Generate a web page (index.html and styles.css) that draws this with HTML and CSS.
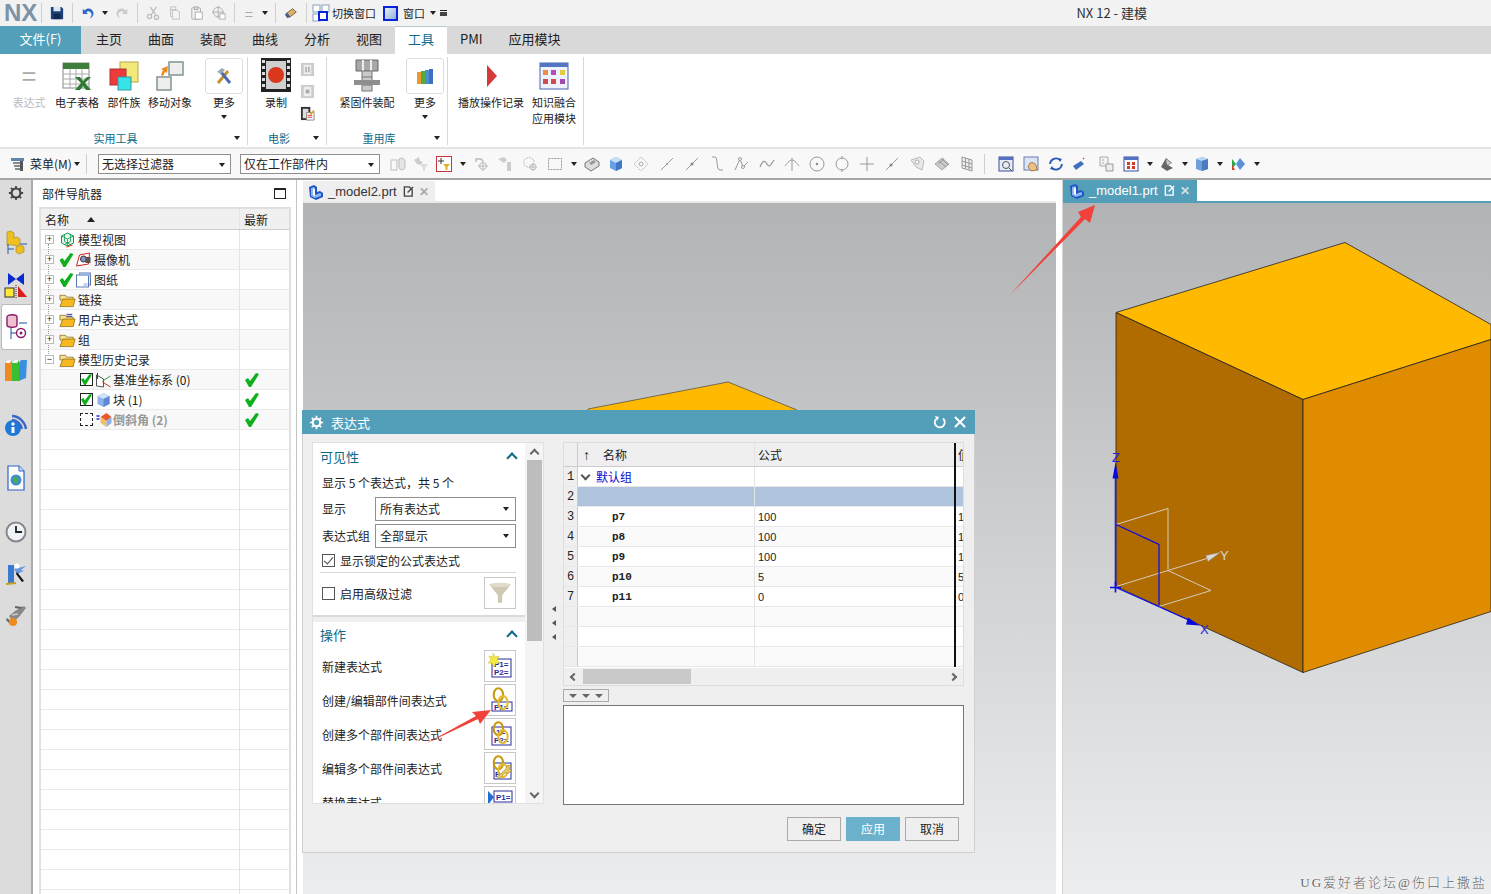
FILE: index.html
```html
<!DOCTYPE html>
<html lang="zh-CN">
<head>
    <meta charset="UTF-8">
    <title>NX 12 - 建模</title>
    <link rel="stylesheet" href="styles.css">
</head>
<body>
    <svg class="defs" width="0" height="0">
        <symbol id="partcube" viewBox="0 0 16 16">
            <path d="M1 3l5-2 3 2v5l3-1 3 2v4l-7 3-6-3z" fill="#1f55c8"/>
            <path d="M3 4l3-1 1 1v7l5-2 1 1v2l-6 2-4-2z" fill="#8fb8f0"/>
            <path d="M5 5v6l2 1V5z" fill="#ffffff"/>
        </symbol>
        <symbol id="tabdoc" viewBox="0 0 12 12">
            <path d="M1.500 1h5.500l3 3v7h-8.500z" fill="none" stroke="currentColor" stroke-width="1.500"/>
            <path d="M5 7l6-6" stroke="currentColor" stroke-width="1.500"/>
        </symbol>
        <symbol id="okcheck" viewBox="0 0 14 14">
            <path d="M0 7l3-2 2 3 6-8 3 1-8 13H4z" fill="#10b01c"/>
        </symbol>
        <symbol id="folder" viewBox="0 0 18 16">
            <path d="M1 3h6l1 2h7v3H1z" fill="#f6e39a" stroke="#8a6a10" stroke-width=".8"/>
            <path d="M1 15l3-8h13l-2 8z" fill="#f7b820" stroke="#8a6a10" stroke-width=".8"/>
        </symbol>
        <symbol id="chain" viewBox="0 0 14 20">
            <ellipse cx="5" cy="6" rx="3.600" ry="5" fill="none" stroke="#c79a10" stroke-width="1.600"/>
            <ellipse cx="8.500" cy="12" rx="3.600" ry="5" fill="none" stroke="#e2bb30" stroke-width="1.600"/>
        </symbol>
    </svg>

    <div class="app">
        <div class="quickbar">
            <span class="nx-logo">NX</span>
            <span class="vsep"></span>
            <svg class="qi" viewBox="0 0 16 16"><path d="M1 1h12l2 2v12H1z" fill="#1d3f78"/><rect x="4" y="1" width="8" height="5" fill="#dfe8f5"/><rect x="4" y="9" width="8" height="6" fill="#12294f"/></svg>
            <span class="vsep"></span>
            <svg class="qi" viewBox="0 0 16 16"><path d="M2 3v6h6L6 7c2-2 5-1 6 2 .5 2-1 4-2 5 3-1 5-4 4-7-1-4-6-6-10-2z" fill="#2a68c8"/></svg>
            <span class="caret"></span>
            <svg class="qi" viewBox="0 0 16 16"><path d="M14 3v6H8l2-2c-2-2-5-1-6 2-.5 2 1 4 2 5-3-1-5-4-4-7 1-4 6-6 10-2z" fill="#c9c9c9"/></svg>
            <span class="vsep"></span>
            <svg class="qi" viewBox="0 0 16 16"><path d="M12 1L6 10M5 1l6 9" stroke="#bbb" stroke-width="1.400"/><circle cx="4" cy="12" r="2.400" fill="none" stroke="#bbb" stroke-width="1.400"/><circle cx="12" cy="13" r="2.400" fill="none" stroke="#bbb" stroke-width="1.400"/></svg>
            <svg class="qi" viewBox="0 0 16 16"><path d="M3 1h6v3H3zM5 5h6l2 2v8H5zM3 4v8h2" fill="#f4f4f4" stroke="#bbb"/></svg>
            <svg class="qi" viewBox="0 0 16 16"><rect x="2" y="2" width="10" height="13" rx="1" fill="#eee" stroke="#aaa"/><rect x="5" y="1" width="4" height="3" fill="#ddd" stroke="#aaa"/><rect x="6" y="7" width="8" height="8" fill="#fff" stroke="#aaa"/></svg>
            <svg class="qi" viewBox="0 0 16 16"><circle cx="7" cy="7" r="5.500" fill="none" stroke="#aaa"/><path d="M7 0v14M0 7h14" stroke="#aaa"/><rect x="9" y="9" width="6" height="6" fill="#fff" stroke="#aaa"/></svg>
            <span class="vsep"></span>
            <span class="eq-mark">=</span>
            <span class="caret"></span>
            <span class="vsep"></span>
            <svg class="qi" viewBox="0 0 16 16"><path d="M2 9l8-6 4 4-8 6z" fill="#d9b46a" stroke="#6e5a2e"/><path d="M1 10l3-2 3 4-3 2z" fill="#3d5e9c"/></svg>
            <span class="vsep"></span>
            <svg class="qi wide" viewBox="0 0 18 18"><rect x="1" y="1" width="7" height="7" fill="#fff" stroke="#8aa0bd"/><rect x="10" y="1" width="7" height="7" fill="#fff" stroke="#8aa0bd"/><rect x="1" y="10" width="7" height="7" fill="#fff" stroke="#8aa0bd"/><rect x="7" y="8" width="8" height="8" fill="#fff" stroke="#0a22d8" stroke-width="2"/></svg>
            <span class="q-label">切换窗口</span>
            <span class="win-icon"></span>
            <span class="q-label win-label">窗口</span>
            <span class="caret"></span>
            <span class="more-caret"></span>
            <span class="app-title">NX 12 - 建模</span>
        </div>

        <div class="tabs">
            <span class="tab file-tab">文件(F)</span>
            <span class="tab">主页</span>
            <span class="tab">曲面</span>
            <span class="tab">装配</span>
            <span class="tab">曲线</span>
            <span class="tab">分析</span>
            <span class="tab">视图</span>
            <span class="tab active">工具</span>
            <span class="tab">PMI</span>
            <span class="tab">应用模块</span>
        </div>

        <div class="ribbon">
            <div class="group group-util">
                <div class="group-items">
                    <div class="rb-item w46 off">
                        <span class="rb-icon"><span class="eq-big">=</span></span>
                        <span>表达式</span>
                    </div>
                    <div class="rb-item w50">
                        <svg class="rb-icon" viewBox="0 0 30 30"><rect x="1" y="2" width="26" height="25" fill="#fff" stroke="#888"/><rect x="1" y="2" width="26" height="6" fill="#3f7d3a"/><path d="M1 13h26M1 18h26M1 23h26M8 8v19M14 8v19M20 8v19" stroke="#aaa"/><path d="M13 16h5l3 4 4-4h4l-6 6 6 7h-5l-3-4-3 4h-5l6-7z" fill="#2d7a35"/></svg>
                        <span>电子表格</span>
                    </div>
                    <div class="rb-item w44">
                        <svg class="rb-icon" viewBox="0 0 30 30"><rect x="11" y="1" width="18" height="20" fill="#f3e97a" stroke="#b7a84a"/><rect x="1" y="8" width="16" height="16" fill="#ee3a3a" stroke="#a33"/><rect x="9" y="16" width="13" height="13" fill="#37e3e8" stroke="#3b9a9c"/></svg>
                        <span>部件族</span>
                    </div>
                    <div class="rb-item w48">
                        <svg class="rb-icon" viewBox="0 0 30 30"><rect x="14" y="1" width="14" height="13" fill="#eee" stroke="#8a9a9a" stroke-width="1.600"/><rect x="2" y="16" width="14" height="13" fill="#eee" stroke="#8a9a9a" stroke-width="1.600"/><path d="M6 14l2-5-2-1 7-3-1 7-2-1-2 4z" fill="#f08a1c"/></svg>
                        <span>移动对象</span>
                    </div>
                    <div class="rb-more">
                        <span class="more-box"><svg width="20" height="20" viewBox="0 0 20 20"><path d="M4 17L14 5" stroke="#c8912a" stroke-width="3"/><path d="M16 17L7 6" stroke="#4a6cae" stroke-width="3"/><path d="M3 6l5-4 3 2-4 4z" fill="#9aa7b8"/></svg></span>
                        <span>更多</span>
                        <span class="caret"></span>
                    </div>
                </div>
                <div class="group-foot"><span class="group-label">实用工具</span><span class="caret"></span></div>
            </div>

            <div class="group group-movie">
                <div class="group-items">
                    <div class="rb-item w36">
                        <svg class="rb-icon tall" viewBox="0 0 30 34"><rect width="30" height="34" fill="#222"/><path d="M1 2h3v3H1zM1 8h3v3H1zM1 14h3v3H1zM1 20h3v3H1zM1 26h3v3H1zM26 2h3v3h-3zM26 8h3v3h-3zM26 14h3v3h-3zM26 20h3v3h-3zM26 26h3v3h-3z" fill="#ddd"/><rect x="5" y="3" width="20" height="28" fill="#cfcfcf"/><circle cx="15" cy="17" r="8" fill="#d9381e"/></svg>
                        <span>录制</span>
                    </div>
                    <div class="rb-column">
                        <svg class="mini" viewBox="0 0 16 16"><rect x="1" y="1" width="14" height="14" fill="#ccc"/><rect x="4" y="3" width="8" height="10" fill="#eee"/><path d="M6.500 5v6M9.500 5v6" stroke="#aaa" stroke-width="1.600"/></svg>
                        <svg class="mini" viewBox="0 0 16 16"><rect x="1" y="1" width="14" height="14" fill="#ccc"/><rect x="4" y="3" width="8" height="10" fill="#eee"/><rect x="6" y="6" width="4" height="4" fill="#aaa"/></svg>
                        <svg class="mini" viewBox="0 0 16 16"><rect x="1" y="1" width="10" height="14" fill="#333"/><rect x="3" y="3" width="6" height="10" fill="#ddd"/><path d="M7 7h8v8H7z" fill="#fff" stroke="#888"/><path d="M8 10h5M8 12h5" stroke="#d33"/><path d="M11 9l4-4" stroke="#d9a520" stroke-width="2"/></svg>
                    </div>
                </div>
                <div class="group-foot"><span class="group-label">电影</span><span class="caret"></span></div>
            </div>

            <div class="group group-reuse">
                <div class="group-items">
                    <div class="rb-item w72">
                        <svg class="rb-icon tall" viewBox="0 0 30 34"><path d="M4 2h22v11H4z" fill="#a8a8a8" stroke="#666"/><path d="M11 2v11M19 2v11" stroke="#eee" stroke-width="2"/><rect x="10" y="13" width="10" height="20" fill="#c9c9c9" stroke="#777"/><path d="M10 19h10M10 23h10M10 27h10" stroke="#777"/><rect x="2" y="22" width="26" height="5" fill="#8e8e8e"/></svg>
                        <span>紧固件装配</span>
                    </div>
                    <div class="rb-more">
                        <span class="more-box"><svg width="18" height="18" viewBox="0 0 18 18"><rect x="1" y="5" width="4" height="12" fill="#e89a2c"/><rect x="5" y="4" width="4" height="13" fill="#58a83c"/><rect x="9" y="3" width="4" height="14" fill="#4a8fd0"/><rect x="13" y="2" width="4" height="15" fill="#3f6fc0"/></svg></span>
                        <span>更多</span>
                        <span class="caret"></span>
                    </div>
                </div>
                <div class="group-foot"><span class="group-label">重用库</span><span class="caret"></span></div>
            </div>

            <div class="group group-play">
                <div class="group-items">
                    <div class="rb-item w72">
                        <svg class="rb-icon" viewBox="0 0 30 30"><path d="M11 4l10 11-10 11z" fill="#d63a36"/></svg>
                        <span>播放操作记录</span>
                    </div>
                    <div class="rb-item w54">
                        <svg class="rb-icon" viewBox="0 0 30 30"><rect x="1" y="2" width="28" height="26" fill="#eef2fa" stroke="#4a64b0"/><rect x="1" y="2" width="28" height="4" fill="#5474c4"/><rect x="4" y="9" width="5" height="5" fill="#ee8a4a"/><rect x="12" y="9" width="5" height="5" fill="#b64ac0"/><rect x="21" y="9" width="5" height="5" fill="#e8c840"/><rect x="4" y="18" width="5" height="5" fill="#d04a4a"/><rect x="12" y="18" width="5" height="5" fill="#d04a4a"/><rect x="21" y="18" width="5" height="5" fill="#a04ab0"/></svg>
                        <span>知识融合<br>应用模块</span>
                    </div>
                </div>
            </div>
        </div>

        <div class="selbar">
            <svg class="qi menu-ico" viewBox="0 0 16 16"><rect x="1" y="2" width="13" height="3" fill="#5d87a8"/><path d="M3 7h9M4 10h8M5 13h7" stroke="#666" stroke-width="1.600"/><rect x="10" y="5" width="3" height="10" fill="#555"/></svg>
            <span class="menu-text">菜单(M)</span>
            <span class="caret"></span>
            <span class="vsep sel-sep"></span>
            <div class="combo combo-a">无选择过滤器<span class="caret"></span></div>
            <div class="combo combo-b">仅在工作部件内<span class="caret"></span></div>
            <span class="slot s25"><svg viewBox="0 0 16 16"><rect x="1" y="4" width="6" height="10" fill="none" stroke="#bbb"/><path d="M9 3c3-2 6 0 6 3v5c0 3-4 4-6 1z" fill="#e5e5e5" stroke="#bbb"/></svg></span>
            <span class="slot s22"><svg viewBox="0 0 16 16"><path d="M1 4l5-3 1 4 3 1-3 3-3-1z" fill="#ccc"/><path d="M7 8h8l-3 4v3h-2v-3z" fill="#ddd"/></svg></span>
            <span class="slot s24"><span class="redbox"><svg viewBox="0 0 12 12"><path d="M3 0v6M0 3h6" stroke="#333"/><path d="M5 6h7L9.500 9v3h-2V9z" fill="#e8b020"/></svg></span></span>
            <span class="caret-slot"><span class="caret"></span></span>
            <span class="slot s24"><svg viewBox="0 0 16 16"><path d="M3 6V3h5l2 2" fill="none" stroke="#bbb" stroke-width="1.500"/><circle cx="10" cy="10" r="3.500" fill="none" stroke="#bbb"/><path d="M10 5v10M5 10h10" stroke="#bbb"/></svg></span>
            <span class="slot s24"><svg viewBox="0 0 16 16"><path d="M1 3l6-2 3 3-3 3zM10 6h4v9h-4z" fill="#ccc"/></svg></span>
            <span class="slot s25"><svg viewBox="0 0 16 16"><path d="M7 1l5 3v5l-5 3-5-3V4z" fill="none" stroke="#bbb" stroke-dasharray="2 1"/><circle cx="11" cy="11" r="3" fill="none" stroke="#bbb"/><path d="M11 7v8M7 11h8" stroke="#bbb"/></svg></span>
            <span class="slot s25"><svg viewBox="0 0 16 16"><rect x="1.500" y="2.500" width="13" height="11" fill="none" stroke="#999" stroke-dasharray="2 1"/></svg></span>
            <span class="caret-slot"><span class="caret"></span></span>
            <span class="slot s24"><svg viewBox="0 0 16 16"><path d="M1 7l8-5 6 4v4l-8 5-6-4z" fill="#ddd" stroke="#777"/><path d="M5 7l5-3 2 2-5 3z" fill="#999"/></svg></span>
            <span class="slot s24"><svg viewBox="0 0 16 16"><path d="M8 1l6 3v8l-6 3-6-3V4z" fill="#6aa0e0"/><path d="M8 1l6 3-6 3-6-3z" fill="#c5ddf5"/><path d="M8 7v8l6-3V4z" fill="#3d78c8"/></svg></span>
            <span class="slot s26"><svg viewBox="0 0 16 16"><path d="M8 1l7 7-7 7-7-7z" fill="none" stroke="#bbb" stroke-dasharray="2 1"/><circle cx="8" cy="8" r="2" fill="none" stroke="#aaa"/></svg></span>
            <span class="slot s25"><svg viewBox="0 0 16 16"><path d="M2 14L14 2" stroke="#999"/><circle cx="8" cy="8" r="1" fill="#999"/></svg></span>
            <span class="slot s25"><svg viewBox="0 0 16 16"><path d="M2 14L14 2" stroke="#999"/><circle cx="8" cy="8" r="1.500" fill="#888"/></svg></span>
            <span class="slot s25"><svg viewBox="0 0 16 16"><path d="M3 1h3c3 0 1 13 5 13h3" fill="none" stroke="#999"/></svg></span>
            <span class="slot s25"><svg viewBox="0 0 16 16"><path d="M1 14L6 3l3 8 5-5" fill="none" stroke="#999"/><circle cx="6" cy="3" r="1.500" fill="#fff" stroke="#999"/><circle cx="9" cy="11" r="1.500" fill="#fff" stroke="#999"/></svg></span>
            <span class="slot s25"><svg viewBox="0 0 16 16"><path d="M1 11c3-7 5-7 7-3s4 1 7-4" fill="none" stroke="#999" stroke-width="1.200"/></svg></span>
            <span class="slot s25"><svg viewBox="0 0 16 16"><path d="M8 2v13M1 10c3-4 5-6 7-6s4 2 7 6" fill="none" stroke="#999"/></svg></span>
            <span class="slot s25"><svg viewBox="0 0 16 16"><circle cx="8" cy="8" r="7" fill="none" stroke="#999"/><circle cx="8" cy="8" r="1.200" fill="#888"/></svg></span>
            <span class="slot s25"><svg viewBox="0 0 16 16"><circle cx="8" cy="8" r="6" fill="none" stroke="#999"/><path d="M8 0v3M8 13v3" stroke="#999"/></svg></span>
            <span class="slot s25"><svg viewBox="0 0 16 16"><path d="M8 1v14M1 8h14" stroke="#999"/></svg></span>
            <span class="slot s25"><svg viewBox="0 0 16 16"><path d="M2 14L14 2" stroke="#999"/><circle cx="7" cy="9" r="1.500" fill="#888"/></svg></span>
            <span class="slot s25"><svg viewBox="0 0 16 16"><path d="M2 4l9-3 4 4-2 9-6-3z" fill="#e8e8e8" stroke="#bbb"/><circle cx="8" cy="6" r="2" fill="#fff" stroke="#aaa"/></svg></span>
            <span class="slot s25"><svg viewBox="0 0 16 16"><path d="M8 2l7 6-7 6-7-6z" fill="#ccc" stroke="#aaa"/><path d="M5 5l7 6M8 3l6 6M4 8l6-5" stroke="#999"/></svg></span>
            <span class="slot s25"><svg viewBox="0 0 16 16"><path d="M3 1l10 3v11L3 12z" fill="#eee" stroke="#999"/><path d="M6.500 2v11M10 3v11M3 5l10 3M3 9l10 3" stroke="#999"/></svg></span>
            <span class="vsep view-sep"></span>
            <span class="slot s24"><svg viewBox="0 0 16 16"><rect x="1" y="1" width="14" height="14" fill="#e6ecf6" stroke="#3a4f9a"/><rect x="1" y="1" width="14" height="3" fill="#5470c0"/><circle cx="8" cy="9" r="3.500" fill="none" stroke="#555"/><path d="M11 12l3 3" stroke="#555"/></svg></span>
            <span class="slot s25"><svg viewBox="0 0 16 16"><rect x="1" y="1" width="14" height="13" fill="#dde4f2" stroke="#6a7cae"/><path d="M7 7c2-1 5 0 6 2l1 5-6 1-3-4z" fill="#eabf8a" stroke="#a8804a"/></svg></span>
            <span class="slot s25"><svg viewBox="0 0 16 16"><path d="M2 8a6 6 0 0 1 10-4" fill="none" stroke="#2f55b8" stroke-width="1.800"/><path d="M14 8a6 6 0 0 1-10 4" fill="none" stroke="#2f55b8" stroke-width="1.800"/><path d="M10 2l4 1-2 3zM6 14l-4-1 2-3z" fill="#2f55b8"/></svg></span>
            <span class="slot s24"><svg viewBox="0 0 16 16"><path d="M1 10l8-5 3 3-8 6z" fill="#3f6fc0"/><path d="M11 2l1 1" stroke="#d33" stroke-width="1.500"/></svg></span>
            <span class="slot s27"><svg viewBox="0 0 16 16"><path d="M2 1h8v9H2z" fill="#f2f2f2" stroke="#aaa"/><path d="M8 8h7v7H8z" fill="#eee" stroke="#999"/><path d="M4 4h2M4 7h2" stroke="#aaa"/></svg></span>
            <span class="slot s24"><svg viewBox="0 0 16 16"><rect x="1" y="1" width="14" height="14" fill="#fff" stroke="#3a4f9a"/><rect x="1" y="1" width="14" height="3" fill="#5470c0"/><path d="M4 6h3v3H4zM9 6h3v3H9zM4 10h3v3H4zM9 10h3v3H9z" fill="#d83a2a"/></svg></span>
            <span class="caret-slot"><span class="caret"></span></span>
            <span class="slot s22"><svg viewBox="0 0 16 16"><path d="M2 11l5-9 6 5-4 2 5 3-6 3z" fill="#666"/><path d="M7 3l5 4-4 2z" fill="#ccc"/></svg></span>
            <span class="caret-slot"><span class="caret"></span></span>
            <span class="slot s22"><svg viewBox="0 0 16 16"><path d="M8 1l6 2v10l-6 2-6-2V3z" fill="#6f9fd8"/><path d="M8 1l6 2-6 2-6-2z" fill="#bdd6f2"/><path d="M8 5v10l6-2V3z" fill="#4a7cc0"/></svg></span>
            <span class="caret-slot"><span class="caret"></span></span>
            <span class="slot s24"><svg viewBox="0 0 16 16"><path d="M2 3l4 5-4 5z" fill="#2aa84a"/><path d="M2 9v5h3z" fill="#d83a2a"/><path d="M10 2l5 6-5 6-4-6z" fill="#5a90d8"/></svg></span>
            <span class="caret-slot"><span class="caret"></span></span>
        </div>

        <div class="workspace">
            <div class="rail">
                <svg class="rail-ico gear-top" viewBox="0 0 18 18"><circle cx="9" cy="9" r="5" fill="none" stroke="#444" stroke-width="2.400"/><path d="M9 1v3M9 14v3M1 9h3M14 9h3M3.300 3.300l2 2M12.700 12.700l2 2M3.300 14.700l2-2M12.700 5.300l2-2" stroke="#444" stroke-width="2"/></svg>
                <span class="rail-item">
                    <svg class="rail-ico" viewBox="0 0 24 26"><path d="M3 2l4-1 3 2v5l3-1 3 2v5l-3 2-4-1H3z" fill="#f0c020" stroke="#a08010" stroke-width=".6"/><path d="M4 14v10M4 19h6M16 14h7" stroke="#1e5fa8"/><path d="M12 17l5-2 3 2v5l-5 2-3-2z" fill="#f0c020" stroke="#a08010" stroke-width=".6"/></svg>
                </span>
                <span class="rail-item">
                    <svg class="rail-ico" viewBox="0 0 24 26"><path d="M4 1l8 6 8-6v12l-8-6-8 6z" fill="#0a2ad0"/><rect x="1" y="16" width="9" height="9" fill="#ffe63a" stroke="#333"/><path d="M14 14l9 11h-9z" fill="#d8201a"/><path d="M12 13v13" stroke="#333" stroke-dasharray="1 1"/></svg>
                </span>
                <span class="rail-item current">
                    <svg class="rail-ico" viewBox="0 0 24 26"><path d="M2 3c0-3 10-3 10 0v8c0 3-10 3-10 0z" fill="#f0c0d0" stroke="#8a1a6a" stroke-width="1.400"/><path d="M14 9h8M6 14v11M6 19h6" stroke="#1e4fa8"/><circle cx="16" cy="19" r="4.500" fill="none" stroke="#8a1a6a" stroke-width="1.400"/><circle cx="16" cy="19" r="1.500" fill="#8a1a6a"/></svg>
                </span>
                <span class="rail-item">
                    <svg class="rail-ico" viewBox="0 0 24 26"><path d="M1 7l2-3h5v21H1z" fill="#f08a20"/><path d="M8 7l2-3h5v21H8z" fill="#38c030"/><path d="M15 7l2-3h6l-1 18-7 3z" fill="#3a90e0"/><path d="M1 7l2-3h5L6 7zM8 7l2-3h5l-2 3z" fill="#f4f4f4"/></svg>
                </span>
                <span class="rail-item">
                    <svg class="rail-ico" viewBox="0 0 24 26"><circle cx="9" cy="16" r="8" fill="#1e78d8"/><rect x="7.500" y="15" width="3" height="6" fill="#fff"/><circle cx="9" cy="12" r="1.700" fill="#fff"/><path d="M8 4c7 0 13 6 14 13M8 8c5 0 9 4 10 9" fill="none" stroke="#3a68c8" stroke-width="2.400"/></svg>
                </span>
                <span class="rail-item">
                    <svg class="rail-ico" viewBox="0 0 24 26"><path d="M4 1h11l5 5v19H4z" fill="#fff" stroke="#2a62c8" stroke-width="1.200"/><path d="M15 1v5h5" fill="#cfe0f5" stroke="#2a62c8"/><circle cx="12" cy="15" r="5.500" fill="#3f8fc8"/><path d="M9 12l5 1-1 5-3-1z" fill="#4cb04a"/></svg>
                </span>
                <span class="rail-item">
                    <svg class="rail-ico" viewBox="0 0 24 26"><circle cx="12" cy="14" r="10.500" fill="#888"/><circle cx="12" cy="14" r="8.500" fill="#eef3fa"/><path d="M12 8v6h6" fill="none" stroke="#222" stroke-width="1.800"/></svg>
                </span>
                <span class="rail-item">
                    <svg class="rail-ico" viewBox="0 0 24 26"><path d="M4 4h6v18H4z" fill="#3a7ad0"/><path d="M10 8l12-3-5 4 3 1-7 3z" fill="#6a9ae0"/><path d="M13 11l7 9-2 1-6-8z" fill="#111"/><path d="M2 23l10-1" stroke="#c8a020" stroke-width="2"/><circle cx="13" cy="5" r="2.500" fill="#fff"/></svg>
                </span>
                <span class="rail-item">
                    <svg class="rail-ico" viewBox="0 0 24 26"><path d="M5 14l6-5 9-5 2 2-7 9-6 5z" fill="#888"/><path d="M11 4l8 1-3 2-5-1z" fill="#666"/><path d="M3 16l6 5-2 2-5-5z" fill="#666"/><circle cx="9" cy="20" r="4" fill="#ee8a20"/><path d="M8 13l6-1" stroke="#ccc" stroke-width="1.500"/></svg>
                </span>
            </div>

            <div class="navigator">
                <div class="nav-head">部件导航器<span class="nav-max"></span></div>
                <div class="nav-table">
                    <div class="nav-row nav-title">
                        <span class="cell-name">名称<span class="sort-up"></span></span>
                        <span class="cell-new">最新</span>
                    </div>
                    <div class="nav-body">
                        <div class="tree-line"></div>
                        <div class="nav-row">
                            <span class="cell-name"><span class="twisty">+</span>
                                <svg class="tree-ico" viewBox="0 0 16 16"><path d="M8 1l6 3v7l-6 3-6-3V4z" fill="#e4f6ea" stroke="#109a50"/><path d="M2 4l6 3 6-3M8 7v7M5 2.500v7l6 3M11 2.500v7l-6 3" fill="none" stroke="#109a50" stroke-width=".8"/><path d="M7 15l6-2" stroke="#e2401e" stroke-width="1.200"/></svg>
                                模型视图</span>
                            <span class="cell-new"></span>
                        </div>
                        <div class="nav-row alt">
                            <span class="cell-name"><span class="twisty">+</span>
                                <svg class="tree-check" viewBox="0 0 14 14"><use href="#okcheck"/></svg>
                                <svg class="tree-ico" viewBox="0 0 16 16"><path d="M1 14l3-11 10-2-1 11z" fill="#fff" stroke="#d8201a"/><circle cx="8" cy="7" r="3" fill="#8a92c8" stroke="#333"/><rect x="10" y="5" width="5" height="6" fill="#555"/></svg>
                                摄像机</span>
                            <span class="cell-new"></span>
                        </div>
                        <div class="nav-row">
                            <span class="cell-name"><span class="twisty">+</span>
                                <svg class="tree-check" viewBox="0 0 14 14"><use href="#okcheck"/></svg>
                                <svg class="tree-ico" viewBox="0 0 16 16"><rect x="4" y="1" width="11" height="12" fill="#e7edf8" stroke="#5a78b0"/><rect x="1" y="3" width="12" height="12" fill="#fff" stroke="#5a78b0"/><path d="M4 1h11v3H4z" fill="#9ab4dc"/><rect x="8" y="11" width="4" height="3" fill="#c4d2ea"/></svg>
                                图纸</span>
                            <span class="cell-new"></span>
                        </div>
                        <div class="nav-row alt">
                            <span class="cell-name"><span class="twisty">+</span>
                                <svg class="tree-ico" viewBox="0 0 18 16"><use href="#folder"/></svg>
                                链接</span>
                            <span class="cell-new"></span>
                        </div>
                        <div class="nav-row">
                            <span class="cell-name"><span class="twisty">+</span>
                                <svg class="tree-ico" viewBox="0 0 18 16"><use href="#folder"/><path d="M8 2h6M8 4h6" stroke="#2a2a9a"/></svg>
                                用户表达式</span>
                            <span class="cell-new"></span>
                        </div>
                        <div class="nav-row alt">
                            <span class="cell-name"><span class="twisty">+</span>
                                <svg class="tree-ico" viewBox="0 0 18 16"><use href="#folder"/></svg>
                                组</span>
                            <span class="cell-new"></span>
                        </div>
                        <div class="nav-row">
                            <span class="cell-name"><span class="twisty">−</span>
                                <svg class="tree-ico" viewBox="0 0 18 16"><use href="#folder"/></svg>
                                模型历史记录</span>
                            <span class="cell-new"></span>
                        </div>
                        <div class="nav-row alt">
                            <span class="cell-name sub"><span class="node-box"><svg viewBox="0 0 14 14"><use href="#okcheck"/></svg></span>
                                <svg class="tree-ico" viewBox="0 0 16 16"><path d="M1 3v11l7 1V7z" fill="#fff" stroke="#555"/><path d="M2 1v6" stroke="#2a2ae0"/><path d="M7 9l8-5" stroke="#2a9a4a"/><path d="M7 10l8 5" stroke="#d8301a"/></svg>
                                基准坐标系 (0)</span>
                            <span class="cell-new"><svg class="new-check" viewBox="0 0 14 14"><use href="#okcheck"/></svg></span>
                        </div>
                        <div class="nav-row">
                            <span class="cell-name sub"><span class="node-box"><svg viewBox="0 0 14 14"><use href="#okcheck"/></svg></span>
                                <svg class="tree-ico" viewBox="0 0 16 16"><path d="M8 1l6 3v8l-6 3-6-3V4z" fill="#8eb1ec"/><path d="M8 1l6 3-6 3-6-3z" fill="#d4e2f8"/><path d="M8 7v8l6-3V4z" fill="#5d88d4"/></svg>
                                块 (1)</span>
                            <span class="cell-new"><svg class="new-check" viewBox="0 0 14 14"><use href="#okcheck"/></svg></span>
                        </div>
                        <div class="nav-row alt muted">
                            <span class="cell-name sub"><span class="node-box empty"></span>
                                <svg class="tree-ico" viewBox="0 0 16 16"><path d="M1 4h3M1 7h3" stroke="#2a2ae0" stroke-width="1.400"/><path d="M5 5l6-4 5 4-5 4z" fill="#e85a30"/><path d="M5 5v6l6 4V9z" fill="#f2c060"/><path d="M11 9v6l5-4V5z" fill="#8eb1ec"/></svg>
                                倒斜角 (2)</span>
                            <span class="cell-new"><svg class="new-check" viewBox="0 0 14 14"><use href="#okcheck"/></svg></span>
                        </div>
                        <div class="nav-filler"></div>
                    </div>
                </div>
            </div>

            <div class="win win-left">
                <div class="win-tabs">
                    <div class="win-tab">
                        <svg class="part-ico" viewBox="0 0 16 16"><use href="#partcube"/></svg>
                        <span>_model2.prt</span>
                        <svg class="tab-doc" viewBox="0 0 12 12"><use href="#tabdoc"/></svg>
                        <span class="tab-x">✕</span>
                    </div>
                </div>
                <div class="viewport vp-left">
                    <svg class="scene" viewBox="303 203 753 691">
                        <polygon points="588,409 728,382 797,410 797,420 588,420" fill="#ffb900" stroke="#5a5348" stroke-width=".8"/>
                    </svg>
                </div>
            </div>

            <div class="win win-right">
                <div class="win-tabs">
                    <div class="win-tab current">
                        <svg class="part-ico" viewBox="0 0 16 16"><use href="#partcube"/></svg>
                        <span>_model1.prt</span>
                        <svg class="tab-doc" viewBox="0 0 12 12"><use href="#tabdoc"/></svg>
                        <span class="tab-x">✕</span>
                    </div>
                </div>
                <div class="viewport vp-right">
                    <svg class="scene" viewBox="1063 204 428 690">
                        <polygon points="1116,313 1345,243 1491,325 1491,340 1303,400" fill="#ffb900" stroke="#222" stroke-width=".8"/>
                        <polygon points="1116,313 1303,400 1303,673 1116,587" fill="#b06c00" stroke="#222" stroke-width=".8"/>
                        <polygon points="1303,400 1491,340 1491,612 1303,673" fill="#e08c00" stroke="#222" stroke-width=".8"/>
                        <path d="M1116 525L1168 509V570M1116 587L1168 571L1211 591L1159 607" fill="none" stroke="#d5cdbf" stroke-width="1"/>
                        <path d="M1168 571L1210 558" stroke="#d5cdbf"/>
                        <path d="M1115.500 587V470" stroke="#2020e0" stroke-width="1.600"/>
                        <path d="M1116 525L1159 545V606M1116 588L1192 622" fill="none" stroke="#0808f0" stroke-width="1.200"/>
                        <path d="M1115.500 463l-3 16h6z" fill="#0808e0"/>
                        <path d="M1110 588h11M1115.500 582v11" stroke="#0808f0" stroke-width="1.600"/>
                        <path d="M1188 618l12 8-14-1z" fill="#0808e0"/>
                        <path d="M1206 556l14-3-12 9z" fill="#d8d8d8" stroke="#999" stroke-width=".5"/>
                        <text x="1112" y="462" class="axis axis-z">Z</text>
                        <text x="1220" y="560" class="axis axis-y">Y</text>
                        <text x="1200" y="634" class="axis axis-z">X</text>
                    </svg>
                </div>
            </div>
        </div>

        <div class="dialog">
            <div class="dlg-title">
                <svg class="dlg-gear" viewBox="0 0 18 18"><circle cx="9" cy="9" r="4.500" fill="none" stroke="#fff" stroke-width="2.600"/><path d="M9 1v3M9 14v3M1 9h3M14 9h3M3.300 3.300l2 2M12.700 12.700l2 2M3.300 14.700l2-2M12.700 5.300l2-2" stroke="#fff" stroke-width="2"/></svg>
                <span class="dlg-name">表达式</span>
                <svg class="dlg-btn" viewBox="0 0 14 14"><path d="M3 4a5 5 0 1 0 7-.5" fill="none" stroke="#fff" stroke-width="1.800"/><path d="M2 1l4 1-2 4z" fill="#fff"/></svg>
                <svg class="dlg-btn" viewBox="0 0 14 14"><path d="M2 2l10 10M12 2L2 12" stroke="#fff" stroke-width="2"/></svg>
            </div>
            <div class="dlg-body">
                <div class="dlg-left">
                    <div class="sections">
                        <div class="section">
                            <div class="sec-head">可见性<span class="chev"></span></div>
                            <div class="form-line count">显示 5 个表达式，共 5 个</div>
                            <div class="form-line"><label class="form-label">显示</label><div class="combo dlg-combo">所有表达式<span class="caret"></span></div></div>
                            <div class="form-line"><label class="form-label">表达式组</label><div class="combo dlg-combo">全部显示<span class="caret"></span></div></div>
                            <div class="form-line check-line"><span class="check on"></span>显示锁定的公式表达式</div>
                            <div class="form-line filter-line">
                                <span class="check"></span>启用高级过滤
                                <span class="act-btn"><svg viewBox="0 0 24 24"><path d="M2 4h20l-8 10v7h-4v-7z" fill="#cfc8b4"/><ellipse cx="12" cy="4.500" rx="10" ry="2" fill="#e0dbca"/></svg></span>
                            </div>
                        </div>
                        <div class="section ops">
                            <div class="sec-head">操作<span class="chev"></span></div>
                            <div class="op-row">新建表达式
                                <span class="act-btn"><svg viewBox="0 0 26 26"><rect x="5" y="6" width="19" height="18" fill="#fff" stroke="#2a2a9a"/><text x="7" y="14" class="p-text">P1=</text><text x="7" y="22" class="p-text">P2=</text><path d="M6 0l2 4 4-1-2 4 3 3-4 0-2 4-2-4-4 0 3-3-2-4 4 1z" fill="#f2ec40" stroke="#c8b820" stroke-width=".5"/></svg></span>
                            </div>
                            <div class="op-row">创建/编辑部件间表达式
                                <span class="act-btn"><svg viewBox="0 0 26 26"><rect x="5" y="15" width="20" height="9" fill="#fff" stroke="#2a2a9a"/><text x="7" y="23" class="p-text">P1=</text><svg x="1" y="0" width="10" height="15" viewBox="0 0 14 20"><use href="#chain"/></svg></svg></span>
                            </div>
                            <div class="op-row">创建多个部件间表达式
                                <span class="act-btn"><svg viewBox="0 0 26 26"><rect x="5" y="6" width="19" height="18" fill="#fff" stroke="#2a2a9a"/><text x="9" y="14" class="p-text">1=</text><text x="7" y="22" class="p-text">P2=</text><svg x="1" y="0" width="10" height="15" viewBox="0 0 14 20"><use href="#chain"/></svg></svg></span>
                            </div>
                            <div class="op-row">编辑多个部件间表达式
                                <span class="act-btn"><svg viewBox="0 0 26 26"><rect x="7" y="8" width="17" height="16" fill="#fff" stroke="#2a2a9a"/><text x="8" y="22" class="p-text">P</text><svg x="1" y="0" width="10" height="15" viewBox="0 0 14 20"><use href="#chain"/></svg><path d="M10 22l8-7 3-5 3 1-2 3 3 1-3 3-4 0-6 6z" fill="#e8c860" stroke="#8a7020" stroke-width=".5"/></svg></span>
                            </div>
                            <div class="op-row">替换表达式
                                <span class="act-btn"><svg viewBox="0 0 26 26"><rect x="7" y="2" width="18" height="11" fill="#fff" stroke="#2a2a9a"/><text x="9" y="11" class="p-text">P1=</text><path d="M1 2l6 6-6 8z" fill="#1e6fd0"/></svg></span>
                            </div>
                        </div>
                    </div>
                    <div class="vscroll">
                        <span class="sb-arrow up"></span>
                        <span class="sb-thumb"></span>
                        <span class="sb-arrow down"></span>
                    </div>
                </div>
                <div class="splitter"><span></span><span></span><span></span></div>
                <div class="dlg-right">
                    <div class="grid">
                        <div class="grid-head">
                            <span class="g-num"></span>
                            <span class="g-name"><span class="up-arrow">↑</span>名称</span>
                            <span class="g-formula">公式</span>
                            <span class="g-value">值</span>
                        </div>
                        <div class="grid-row"><span class="g-num">1</span><span class="g-name group-name"><span class="chev-down"></span>默认组</span><span class="g-formula"></span><span class="g-value"></span></div>
                        <div class="grid-row selected"><span class="g-num">2</span><span class="g-name"></span><span class="g-formula"></span><span class="g-value"></span></div>
                        <div class="grid-row"><span class="g-num">3</span><span class="g-name param">p7</span><span class="g-formula">100</span><span class="g-value">100</span></div>
                        <div class="grid-row alt"><span class="g-num">4</span><span class="g-name param">p8</span><span class="g-formula">100</span><span class="g-value">100</span></div>
                        <div class="grid-row"><span class="g-num">5</span><span class="g-name param">p9</span><span class="g-formula">100</span><span class="g-value">100</span></div>
                        <div class="grid-row alt"><span class="g-num">6</span><span class="g-name param">p10</span><span class="g-formula">5</span><span class="g-value">5</span></div>
                        <div class="grid-row"><span class="g-num">7</span><span class="g-name param">p11</span><span class="g-formula">0</span><span class="g-value">0</span></div>
                        <div class="grid-row alt"><span class="g-num"></span><span class="g-name"></span><span class="g-formula"></span><span class="g-value"></span></div>
                        <div class="grid-row"><span class="g-num"></span><span class="g-name"></span><span class="g-formula"></span><span class="g-value"></span></div>
                        <div class="grid-row alt"><span class="g-num"></span><span class="g-name"></span><span class="g-formula"></span><span class="g-value"></span></div>
                        <div class="hscroll">
                            <span class="hs-arrow left"></span>
                            <span class="hs-track"><span class="hs-thumb"></span></span>
                            <span class="hs-arrow right"></span>
                        </div>
                    </div>
                    <div class="mini-toggle"><span></span><span></span><span></span></div>
                    <div class="editor"></div>
                </div>
            </div>
            <div class="dlg-foot">
                <span class="btn">确定</span>
                <span class="btn primary">应用</span>
                <span class="btn">取消</span>
            </div>
        </div>

        <svg class="callouts" viewBox="0 0 1491 894">
            <path d="M1008 297L1081 217L1078 212L1095 205L1090 223L1085 219Z" fill="#f0413a"/>
            <path d="M425 744L476 716L472 712L491 710L480 724L478 719Z" fill="#f0413a"/>
        </svg>
        <span class="watermark">UG爱好者论坛@伤口上撒盐</span>
    </div>
</body>
</html>
```

FILE: styles.css
```css
* {
    box-sizing: border-box;
}
body {
    margin: 0;
    font-family: "Noto Sans CJK SC", "Liberation Sans", sans-serif;
    font-size: 12px;
    color: #222222;
    background-color: #FFFFFF;
}
.defs {
    position: absolute;
}
.app {
    position: relative;
    width: 1491px;
    height: 894px;
    overflow: hidden;
    display: flex;
    flex-direction: column;
}

/* title row */
.quickbar {
    height: 26px;
    display: flex;
    align-items: center;
    background-color: #F2F2F2;
    padding-left: 4px;
}
.nx-logo {
    width: 33px;
    font-family: "Liberation Sans", sans-serif;
    font-size: 24px;
    font-weight: bold;
    color: #7C93A8;
}
.vsep {
    width: 1px;
    height: 20px;
    margin: 0 4px;
    flex: none;
    background-color: #CFCFCF;
}
.qi {
    width: 14px;
    height: 14px;
    margin: 0 4px;
    flex: none;
}
.qi.wide {
    width: 18px;
    height: 18px;
    margin: 0 2px 0 1px;
}
.eq-mark {
    width: 14px;
    margin: 0 3px;
    color: #AAAAAA;
    font-size: 15px;
    line-height: 1;
    text-align: center;
}
.caret {
    display: inline-block;
    width: 0;
    height: 0;
    margin: 0 3px;
    flex: none;
    border-left: 3.5px solid transparent;
    border-right: 3.5px solid transparent;
    border-top: 4px solid #222222;
}
.more-caret {
    width: 7px;
    height: 6px;
    margin-left: 1px;
    border-top: 1px solid #222222;
    border-bottom: 4px solid #444444;
}
.q-label {
    font-size: 11px;
    white-space: nowrap;
}
.win-icon {
    width: 15px;
    height: 15px;
    margin: 0 5px 0 7px;
    border: 2px solid #0A22D8;
    background: linear-gradient(135deg, #E8F0FA, #8FB0D8);
}
.win-label {
    margin-right: 2px;
}
.app-title {
    margin-left: auto;
    margin-right: 344px;
    padding-bottom: 2px;
    font-size: 13px;
    color: #333333;
}

/* menu tabs */
.tabs {
    height: 28px;
    display: flex;
    background-color: #D9D9D9;
}
.tab {
    width: 52px;
    text-align: center;
    font-size: 13px;
    line-height: 26px;
    white-space: nowrap;
}
.tab.file-tab {
    width: 81px;
    margin-right: 2px;
    background-color: #539FB9;
    color: #FFFFFF;
}
.tab.active {
    background-color: #FFFFFF;
    color: #0B6A8A;
    border-top: 1px solid #B8C8D0;
    line-height: 24px;
}
.tab:nth-child(n+9) {
    margin-left: 13px;
    width: auto;
}
.tab:nth-child(9) {
    margin-right: 13px;
}

/* ribbon */
.ribbon {
    height: 95px;
    display: flex;
    background-color: #FFFFFF;
    border-bottom: 2px solid #E4E4E4;
}
.group {
    height: 88px;
    margin-top: 3px;
    display: flex;
    flex-direction: column;
    border-right: 1px solid #D8D8D8;
}
.group-util { width: 248px; }
.group-movie { width: 79px; }
.group-reuse { width: 121px; }
.group-play { width: 136px; }
.group-items {
    flex: 1;
    display: flex;
    padding-top: 1px;
}
.group-util .group-items { padding-left: 6px; }
.group-movie .group-items { padding-left: 10px; }
.group-reuse .group-items { padding-left: 4px; }
.group-play .group-items { padding-left: 7px; }
.rb-item {
    display: flex;
    flex-direction: column;
    align-items: center;
    font-size: 11px;
    line-height: 16px;
    text-align: center;
    white-space: nowrap;
}
.rb-item.off {
    color: #BBBBBB;
}
.w36 { width: 36px; }
.w44 { width: 44px; }
.w46 { width: 46px; }
.w48 { width: 48px; }
.w50 { width: 50px; }
.w54 { width: 54px; }
.w72 { width: 72px; }
.rb-icon {
    width: 30px;
    height: 30px;
    margin: 3px 0;
    flex: none;
}
.rb-icon.tall {
    height: 34px;
    margin: 0 0 2px;
}
.eq-big {
    display: block;
    color: #AAAAAA;
    font-size: 26px;
    line-height: 28px;
}
.rb-more {
    width: 38px;
    margin-left: 11px;
    display: flex;
    flex-direction: column;
    align-items: center;
    font-size: 11px;
    line-height: 16px;
}
.group-reuse .rb-more {
    margin-left: 3px;
}
.rb-more .caret {
    margin-top: 5px;
}
.more-box {
    width: 38px;
    height: 36px;
    display: flex;
    align-items: center;
    justify-content: center;
    border: 1px solid #DDDDDD;
    border-radius: 3px;
}
.rb-column {
    width: 16px;
    margin-left: 6px;
    padding-top: 4px;
    display: flex;
    flex-direction: column;
    gap: 7px;
}
.mini {
    width: 15px;
    height: 15px;
}
.group-foot {
    height: 14px;
    display: flex;
    align-items: center;
    padding-right: 4px;
}
.group-label {
    flex: 1;
    text-align: center;
    color: #0B6A8A;
    font-size: 11px;
    line-height: 14px;
}

/* selection bar */
.selbar {
    height: 31px;
    display: flex;
    align-items: center;
    padding-left: 10px;
    background-color: #F8F8F8;
    border-bottom: 2px solid #A5A5A5;
}
.menu-ico {
    width: 16px;
    height: 16px;
    margin: 0 4px 0 0;
}
.menu-text {
    width: 41px;
    white-space: nowrap;
    font-size: 12px;
}
.sel-sep {
    margin: 0 11px 0 3px;
}
.combo {
    position: relative;
    height: 20px;
    padding: 0 14px 0 3px;
    display: flex;
    align-items: center;
    background-color: #FFFFFF;
    border: 1px solid #8F8F8F;
    white-space: nowrap;
}
.combo .caret {
    position: absolute;
    right: 2px;
    top: 8px;
}
.combo-a {
    width: 133px;
    margin-right: 9px;
}
.combo-b {
    width: 140px;
    margin-right: 5px;
}
.slot {
    height: 24px;
    flex: none;
    display: flex;
    align-items: center;
    justify-content: center;
}
.slot svg {
    width: 16px;
    height: 16px;
}
.s22 { width: 22px; }
.s24 { width: 24px; }
.s25 { width: 25px; }
.s26 { width: 26px; }
.s27 { width: 27px; }
.caret-slot {
    width: 13px;
    display: flex;
    justify-content: center;
    flex: none;
}
.caret-slot .caret {
    margin: 0;
}
.redbox {
    width: 16px;
    height: 16px;
    padding: 1px;
    display: flex;
    border: 1px solid #C8323A;
    background-color: #FFFFFF;
}
.redbox svg {
    width: 12px;
    height: 12px;
}
.view-sep {
    margin: 0 9px 0 5px;
}

/* workspace */
.workspace {
    flex: 1;
    min-height: 0;
    display: flex;
}
.rail {
    width: 33px;
    display: flex;
    flex-direction: column;
    align-items: center;
    padding-top: 5px;
    background-color: #DCDCDC;
    border-right: 2px solid #ABABAB;
}
.rail-ico {
    width: 24px;
    height: 26px;
}
.rail-ico.gear-top {
    width: 16px;
    height: 16px;
    margin-bottom: 21px;
    flex: none;
}
.rail-item {
    width: 30px;
    height: 42px;
    margin-left: 1px;
    flex: none;
    display: flex;
    align-items: center;
    justify-content: center;
}
.rail-item.current {
    height: 46px;
    margin-top: -2px;
    margin-bottom: -2px;
    background-color: #FFFFFF;
    border: 1px solid #BBBBBB;
    border-right: none;
    border-radius: 3px 0 0 3px;
}
.rail-item:nth-child(6) { margin-top: 10px; height: 50px; }
.rail-item:nth-child(7) { height: 56px; }
.rail-item:nth-child(8) { height: 50px; }
.rail-item:nth-child(9) { height: 36px; }
.rail-item:nth-child(10) { height: 46px; }

.navigator {
    width: 264px;
    padding: 0 5px 0 6px;
    display: flex;
    flex-direction: column;
    background-color: #FFFFFF;
    border-right: 1px solid #C4C4C4;
}
.nav-head {
    height: 27px;
    padding-left: 3px;
    display: flex;
    align-items: center;
    justify-content: space-between;
    padding-right: 5px;
}
.nav-max {
    width: 12px;
    height: 11px;
    border: 1px solid #222222;
    border-top-width: 2px;
}
.nav-table {
    flex: 1;
    min-height: 0;
    display: flex;
    flex-direction: column;
    border: 2px solid #E0E0E0;
    border-bottom: none;
}
.nav-body {
    position: relative;
    flex: 1;
    min-height: 0;
    display: flex;
    flex-direction: column;
}
.nav-row {
    height: 20px;
    flex: none;
    display: flex;
    border-bottom: 1px solid #EAEAEA;
}
.nav-row.alt {
    background-color: #F8F8F8;
}
.nav-title {
    height: 21px;
    background-color: #F0F0F0;
    border-bottom: 1px solid #CCCCCC;
}
.cell-name {
    width: 199px;
    padding-left: 4px;
    display: flex;
    align-items: center;
    white-space: nowrap;
    border-right: 1px solid #E4E4E4;
}
.cell-new {
    flex: 1;
    padding-left: 4px;
    display: flex;
    align-items: center;
}
.sort-up {
    width: 0;
    height: 0;
    margin-left: 18px;
    border-left: 4.5px solid transparent;
    border-right: 4.5px solid transparent;
    border-bottom: 5px solid #222222;
}
.tree-line {
    position: absolute;
    left: 7px;
    top: 14px;
    width: 1px;
    height: 110px;
    border-left: 1px dotted #999999;
}
.twisty {
    position: relative;
    width: 9px;
    height: 9px;
    margin-right: 5px;
    flex: none;
    background-color: #FFFFFF;
    border: 1px solid #BBBBBB;
    font-size: 9px;
    font-family: "Liberation Sans", sans-serif;
    line-height: 7px;
    text-align: center;
}
.tree-ico {
    width: 17px;
    height: 16px;
    margin-right: 2px;
    flex: none;
}
.tree-check {
    width: 15px;
    height: 14px;
    margin-right: 1px;
    flex: none;
}
.cell-name.sub {
    padding-left: 39px;
}
.cell-name.sub .tree-ico {
    margin-right: 1px;
}
.node-box {
    width: 13px;
    height: 13px;
    margin-right: 2px;
    flex: none;
    display: flex;
    background-color: #FFFFFF;
    border: 1px solid #222222;
}
.node-box.empty {
    border-style: dashed;
}
.node-box svg {
    width: 11px;
    height: 11px;
}
.new-check {
    width: 14px;
    height: 14px;
    margin-left: 1px;
}
.muted {
    color: #999999;
    font-weight: bold;
}
.nav-filler {
    flex: 1;
    background-image:
        linear-gradient(to right, transparent 198px, #E4E4E4 198px, #E4E4E4 199px, transparent 199px),
        repeating-linear-gradient(to bottom, #FFFFFF 0, #FFFFFF 19px, #EAEAEA 19px, #EAEAEA 20px);
}

/* graphics windows */
.win {
    display: flex;
    flex-direction: column;
    min-height: 0;
}
.win-left {
    width: 760px;
    padding: 0 1px 0 6px;
}
.win-right {
    flex: 1;
    margin-left: 5px;
    border-left: 1px solid #D4D4D4;
}
.win-tabs {
    height: 21px;
    flex: none;
    display: flex;
    border-bottom: 2px solid #E8E8E8;
}
.win-right .win-tabs {
    height: 23px;
    border-bottom: 2px solid #539FB9;
}
.win-left .win-tabs {
    height: 23px;
    padding-top: 1px;
}
.win-tab {
    width: 132px;
    height: 21px;
    padding-left: 5px;
    display: flex;
    align-items: center;
    background-color: #EEEEEE;
    font-family: "Liberation Sans", sans-serif;
    font-size: 13px;
    color: #333333;
}
.win-tab.current {
    width: 134px;
    padding-left: 6px;
    background-color: #539FB9;
    color: #FFFFFF;
}
.part-ico {
    width: 16px;
    height: 16px;
    margin-right: 4px;
    flex: none;
}
.tab-doc {
    width: 11px;
    height: 11px;
    margin-left: 6px;
    color: #444444;
}
.win-tab.current .tab-doc {
    color: #FFFFFF;
}
.tab-x {
    margin-left: 5px;
    font-size: 12px;
    font-weight: bold;
    color: #AAAAAA;
}
.win-tab.current .tab-x {
    color: #CFE0E8;
}
.viewport {
    position: relative;
    flex: 1;
    min-height: 0;
    background: linear-gradient(#B2B3B4, #ECEDEE);
}
.scene {
    position: absolute;
    left: 0;
    top: 0;
    width: 100%;
    height: 100%;
}
.axis {
    font-family: "Liberation Sans", sans-serif;
    font-size: 13px;
}
.axis-z {
    fill: #2020E0;
}
.axis-y {
    fill: #D8D8D8;
}

/* expression dialog */
.dialog {
    position: absolute;
    left: 302px;
    top: 410px;
    width: 673px;
    height: 443px;
    display: flex;
    flex-direction: column;
    background-color: #EFEFEF;
    border: 1px solid #D0D0D0;
    border-top: none;
}
.dlg-title {
    height: 24px;
    margin: 0 -1px;
    padding: 0 8px 0 7px;
    display: flex;
    flex: none;
    align-items: center;
    background-color: #539FB9;
    color: #FFFFFF;
    font-size: 13px;
}
.dlg-gear {
    width: 15px;
    height: 15px;
    margin-right: 7px;
}
.dlg-name {
    flex: 1;
}
.dlg-btn {
    width: 14px;
    height: 14px;
    margin-left: 6px;
}
.dlg-body {
    height: 372px;
    flex: none;
    padding: 8px 10px 0 9px;
    display: flex;
}
.dlg-left {
    width: 232px;
    height: 362px;
    flex: none;
    display: flex;
    border: 1px solid #E0E0E0;
    background-color: #F4F4F4;
}
.sections {
    width: 212px;
    height: 360px;
    overflow: hidden;
    display: flex;
    flex-direction: column;
    gap: 5px;
    background-color: #EFEFEF;
}
.section {
    padding: 0 9px 0 7px;
    background-color: #FFFFFF;
}
.section:first-child {
    height: 174px;
    flex: none;
    border-bottom: 2px solid #DADADA;
}
.sec-head {
    height: 26px;
    display: flex;
    align-items: center;
    justify-content: space-between;
    font-size: 13px;
    color: #0B6A8A;
}
.chev {
    width: 8px;
    height: 8px;
    margin: 4px 0 0 0;
    border-top: 2px solid #0B6A8A;
    border-left: 2px solid #0B6A8A;
    transform: rotate(45deg);
}
.form-line {
    display: flex;
    align-items: center;
    min-height: 27px;
    padding-left: 2px;
}
.form-line.count {
    min-height: 26px;
    padding-top: 1px;
}
.form-label {
    width: 53px;
    flex: none;
    white-space: nowrap;
}
.dlg-combo {
    width: 141px;
    height: 24px;
    padding-left: 4px;
}
.dlg-combo .caret {
    top: 9px;
    right: 3px;
}
.check {
    width: 13px;
    height: 13px;
    margin-right: 5px;
    flex: none;
    border: 1px solid #555555;
    background-color: #FFFFFF;
    position: relative;
}
.check.on::after {
    content: "";
    position: absolute;
    left: 3px;
    top: 0;
    width: 4px;
    height: 8px;
    border-right: 1.5px solid #444444;
    border-bottom: 1.5px solid #444444;
    transform: rotate(40deg);
}
.check-line {
    min-height: 24px;
    border-bottom: 1px solid #D8D8D8;
}
.filter-line {
    min-height: 36px;
    margin-top: 2px;
}
.act-btn {
    width: 32px;
    height: 32px;
    margin-left: auto;
    flex: none;
    display: flex;
    align-items: center;
    justify-content: center;
    background-color: #FFFFFF;
    border: 1px solid #C8C8C8;
}
.act-btn svg {
    width: 26px;
    height: 26px;
}
.p-text {
    font-family: "Liberation Sans", sans-serif;
    font-size: 8px;
    font-weight: bold;
    fill: #2A2A9A;
}
.ops {
    flex: 1;
}
.ops .sec-head {
    height: 24px;
    margin-bottom: 3px;
}
.op-row {
    height: 34px;
    padding-left: 2px;
    display: flex;
    align-items: center;
    white-space: nowrap;
}
.vscroll {
    flex: 1;
    display: flex;
    flex-direction: column;
    align-items: center;
    padding: 0 1px;
}
.sb-arrow {
    width: 7px;
    height: 7px;
    flex: none;
    border-top: 2px solid #666666;
    border-left: 2px solid #666666;
}
.sb-arrow.up {
    margin: 7px 0 3px;
    transform: rotate(45deg);
}
.sb-arrow.down {
    margin: auto 0 6px;
    transform: rotate(225deg);
}
.sb-thumb {
    width: 15px;
    height: 181px;
    background-color: #BDBDBD;
}
.splitter {
    width: 19px;
    height: 362px;
    flex: none;
    display: flex;
    flex-direction: column;
    align-items: center;
    gap: 8px;
    padding-top: 164px;
}
.splitter span {
    width: 0;
    height: 0;
    border-top: 3px solid transparent;
    border-bottom: 3px solid transparent;
    border-right: 4px solid #555555;
}
.dlg-right {
    flex: 1;
    min-width: 0;
}
.grid {
    position: relative;
    height: 244px;
    border: 1px solid #DDDDDD;
    background-color: #FFFFFF;
    overflow: hidden;
}
.grid::after {
    content: "";
    position: absolute;
    left: 390px;
    top: 0;
    width: 2px;
    height: 224px;
    background-color: #111111;
}
.grid-head,
.grid-row {
    height: 20px;
    display: flex;
    border-bottom: 1px solid #E8E8E8;
}
.grid-head {
    height: 24px;
    background-color: #EFEFEF;
    border-bottom: 1px solid #CCCCCC;
}
.grid-row.alt {
    background-color: #FAFAFA;
}
.g-num {
    width: 14px;
    flex: none;
    display: flex;
    align-items: center;
    justify-content: center;
    background-color: #EFEFEF;
    border-right: 1px solid #CCCCCC;
    font-family: "Liberation Mono", monospace;
    font-size: 12px;
}
.g-name {
    width: 177px;
    flex: none;
    display: flex;
    align-items: center;
    border-right: 1px solid #E4E4E4;
    white-space: nowrap;
}
.g-formula {
    width: 200px;
    flex: none;
    padding-left: 3px;
    display: flex;
    align-items: center;
    font-family: "Liberation Sans", sans-serif;
    font-size: 11px;
}
.g-value {
    flex: 1;
    overflow: hidden;
    padding-left: 3px;
    display: flex;
    align-items: center;
    font-family: "Liberation Sans", sans-serif;
    font-size: 11px;
    white-space: nowrap;
}
.grid-head .g-formula,
.grid-head .g-value {
    font-family: "Noto Sans CJK SC", sans-serif;
    font-size: 12px;
}
.up-arrow {
    width: 25px;
    padding-left: 5px;
    font-family: "Liberation Sans", sans-serif;
    font-size: 14px;
}
.group-name {
    color: #0A0AD0;
}
.chev-down {
    width: 7px;
    height: 7px;
    margin: -3px 7px 0 4px;
    border-right: 2px solid #555555;
    border-bottom: 2px solid #555555;
    transform: rotate(45deg);
}
.param {
    padding-left: 34px;
    font-family: "Liberation Mono", monospace;
    font-size: 11px;
    font-weight: bold;
}
.grid-row.selected .g-name,
.grid-row.selected .g-formula,
.grid-row.selected .g-value {
    background-color: #AFC3DD;
}
.hscroll {
    position: absolute;
    left: 0;
    right: 0;
    bottom: 0;
    height: 17px;
    display: flex;
    align-items: center;
    background-color: #EFEFEF;
}
.hs-arrow {
    width: 6px;
    height: 6px;
    flex: none;
    border-top: 2px solid #666666;
    border-left: 2px solid #666666;
}
.hs-arrow.left {
    margin: 0 6px 0 7px;
    transform: rotate(-45deg);
}
.hs-arrow.right {
    margin: 0 7px 0 6px;
    transform: rotate(135deg);
}
.hs-track {
    flex: 1;
    height: 15px;
}
.hs-thumb {
    display: block;
    width: 108px;
    height: 15px;
    background-color: #C9C9C9;
}
.mini-toggle {
    width: 46px;
    height: 13px;
    margin-top: 3px;
    display: flex;
    align-items: center;
    justify-content: space-around;
    padding: 0 3px;
    border: 1px solid #AAAAAA;
}
.mini-toggle span {
    width: 0;
    height: 0;
    border-left: 4px solid transparent;
    border-right: 4px solid transparent;
    border-top: 4px solid #666666;
}
.editor {
    height: 100px;
    margin-top: 3px;
    background-color: #FFFFFF;
    border: 1px solid #777777;
}
.dlg-foot {
    flex: 1;
    padding: 11px 15px 0 0;
    display: flex;
    align-items: flex-start;
    justify-content: flex-end;
    gap: 5px;
}
.btn {
    width: 54px;
    height: 24px;
    text-align: center;
    line-height: 22px;
    background-color: #EFEFEF;
    border: 1px solid #ABABAB;
}
.btn.primary {
    background-color: #6CB1CB;
    border-color: #6CB1CB;
    color: #FFFFFF;
}

/* overlays */
.callouts {
    position: absolute;
    left: 0;
    top: 0;
    width: 1491px;
    height: 894px;
    pointer-events: none;
}
.watermark {
    position: absolute;
    right: 4px;
    bottom: 3px;
    color: #666666;
    font-family: "Liberation Serif", "Noto Sans CJK SC", serif;
    font-size: 13px;
    font-weight: 300;
    letter-spacing: 2px;
    text-shadow: 0 0 2px #FFFFFF;
}
```
